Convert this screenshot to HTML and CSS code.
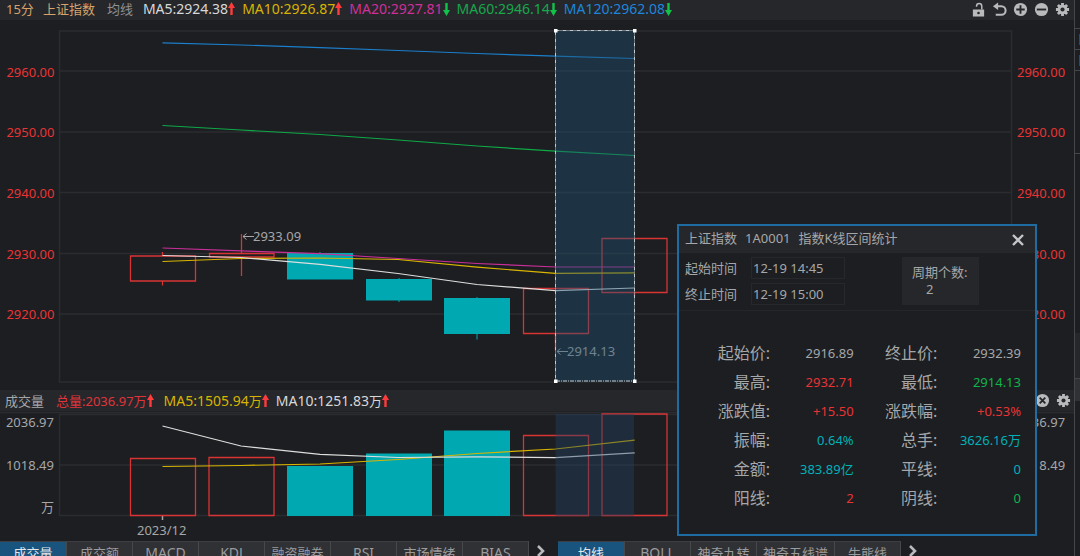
FILE: index.html
```
<!DOCTYPE html>
<html lang="zh-CN">
<head>
<meta charset="utf-8">
<title>上证指数 15分</title>
<link rel="stylesheet" href="styles.css">
</head>
<body>
<svg class="defs" aria-hidden="true">
  <symbol id="up" viewBox="0 0 7 14"><path d="M3.500 0 7 6H4.700v7H2.300V6H0z"/></symbol>
  <symbol id="down" viewBox="0 0 7 14"><path d="M3.500 14 7 8H4.700V1H2.300v7H0z"/></symbol>
  <symbol id="gear" viewBox="0 0 16 16">
    <path fill="none" stroke="currentColor" stroke-width="3" d="M8 1v14M1 8h14M3.100 3.100l9.800 9.800M12.900 3.100l-9.800 9.800"/>
    <circle cx="8" cy="8" r="5.200"/><circle cx="8" cy="8" r="2.200" fill="#26272b"/>
  </symbol>
  <symbol id="chevron" viewBox="0 0 10 12"><path fill="none" stroke="currentColor" stroke-width="2.600" d="M2 1l5 5-5 5"/></symbol>
</svg>
<div class="app">
  <main class="board">
    <header class="bar">
      <div class="legend">
        <span class="period">15分</span>
        <span class="name">上证指数</span>
        <span class="group">均线</span>
        <span class="ma white">MA5:2924.38<svg class="arrow rise"><use href="#up"/></svg></span>
        <span class="ma yellow">MA10:2926.87<svg class="arrow rise"><use href="#up"/></svg></span>
        <span class="ma pink">MA20:2927.81<svg class="arrow fall"><use href="#down"/></svg></span>
        <span class="ma green">MA60:2946.14<svg class="arrow fall"><use href="#down"/></svg></span>
        <span class="ma blue">MA120:2962.08<svg class="arrow fall"><use href="#down"/></svg></span>
      </div>
      <div class="tools">
        <button type="button" aria-label="解锁"><svg viewBox="0 0 16 16"><path d="M2 8h12v7.500H2z"/><path fill="none" stroke="currentColor" stroke-width="1.600" d="M11.500 8V4.500a2.800 2.800 0 0 0-5.600 0V5"/><circle cx="8" cy="11.700" r="1.400" fill="#26272b"/></svg></button>
        <button type="button" aria-label="撤销"><svg viewBox="0 0 16 16"><path d="M1 4.500 6.500.500v8z"/><path fill="none" stroke="currentColor" stroke-width="2.200" d="M5 4.500h5a4.500 4.500 0 0 1 0 9H4"/></svg></button>
        <button type="button" aria-label="放大"><svg viewBox="0 0 16 16"><circle cx="8" cy="8" r="7"/><path stroke="#26272b" stroke-width="2" d="M8 3.500v9M3.500 8h9"/></svg></button>
        <button type="button" aria-label="缩小"><svg viewBox="0 0 16 16"><circle cx="8" cy="8" r="7"/><path stroke="#26272b" stroke-width="2" d="M3 8h10"/></svg></button>
        <button type="button" aria-label="设置"><svg><use href="#gear"/></svg></button>
      </div>
    </header>

    <svg class="chart" viewBox="0 20 1074 370" role="img" aria-label="上证指数15分钟K线">
      <g class="grid">
        <path d="M59.500 31H1011.500V382H59.500zM60 71H1011M60 132H1011M60 192.500H1011M60 253.500H1011M60 314H1011"/>
      </g>
      <g class="price end">
        <text x="54.500" y="77">2960.00</text><text x="54.500" y="137">2950.00</text><text x="54.500" y="198">2940.00</text><text x="54.500" y="259">2930.00</text><text x="54.500" y="319">2920.00</text>
      </g>
      <g class="price">
        <text x="1017" y="77">2960.00</text><text x="1017" y="137">2950.00</text><text x="1017" y="198">2940.00</text><text x="1017" y="259">2930.00</text><text x="1017" y="319">2920.00</text>
      </g>
      <g class="candle-up">
        <path d="M130.500 256h65v25h-65zM162.500 252v4M162.500 281v4.500M209.500 253.500h64.500v3.500h-64.500zM241.500 234v19.500M241.500 257v19M523.500 288.500h65v45h-65zM555.500 333.500v17M602 238.500h65v54h-65zM634.500 292.500v4"/>
      </g>
      <g class="candle-down">
        <path d="M287 253h66v26.500h-66zM319.500 252h1v1h-1zM366 279h66v21.500h-66zM398.500 278h1v24h-1zM444 298h66v36h-66zM476.500 297h1v42.500h-1z"/>
      </g>
      <g class="line">
        <polyline class="s-blue" points="162.500,42.800 241,45 320,47.700 398,50.500 477,53.500 555.500,56.200 634.500,58.500"/>
        <polyline class="s-green" points="162.500,125.500 241,130 320,134.500 398,140 477,146 555.500,151.200 634.500,155.500"/>
        <polyline class="s-pink" points="162.500,248 241,250.800 320,253.700 398,258.500 477,263.500 555.500,267 634.500,267"/>
        <polyline class="s-yellow" points="162.500,261.500 241,258.500 320,258 398,259.500 477,267.200 555.500,273.300 634.500,272.800"/>
        <polyline class="s-white" points="162.500,255.500 241,257.500 320,264.300 398,273.500 477,284.500 555.500,290.700 634.500,288"/>
      </g>
      <g class="mark">
        <path d="M243 236.500h11M246.500 233.500l-3.500 3 3.500 3M557 351.500h11M560.500 348.500l-3.500 3 3.500 3"/>
        <text x="253" y="241">2933.09</text><text x="567" y="356">2914.13</text>
      </g>
      <rect class="range" x="555.500" y="30.500" width="79" height="351"/>
      <path class="range-edge" d="M555.500 30.500h79v350.500h-79z"/>
      <path class="handles" d="M554 29h3.500v3.500H554zM633 29h3.500v3.500H633zM554 379.500h3.500v3.500H554zM633 379.500h3.500v3.500H633z"/>
    </svg>

    <header class="bar volume-bar">
      <div class="legend">
        <span class="group">成交量</span>
        <span class="total">总量:2036.97万<svg class="arrow rise"><use href="#up"/></svg></span>
        <span class="ma yellow">MA5:1505.94<small>万</small><svg class="arrow rise"><use href="#up"/></svg></span>
        <span class="ma white">MA10:1251.83<small>万</small><svg class="arrow rise"><use href="#up"/></svg></span>
      </div>
      <div class="tools">
        <button type="button" aria-label="关闭"><svg viewBox="0 0 16 16"><circle cx="8" cy="8" r="7"/><path stroke="#26272b" stroke-width="2" d="M5 5l6 6M11 5l-6 6"/></svg></button>
        <button type="button" aria-label="指标设置"><svg><use href="#gear"/></svg></button>
      </div>
    </header>

    <svg class="chart" viewBox="0 411 1074 130" role="img" aria-label="成交量">
      <path class="grid" d="M59.500 414.500H1011.500V515.500H59.500zM60 465H1011M0 412.500H1074"/>
      <g class="scale end"><text x="54" y="427">2036.97</text><text x="54" y="470">1018.49</text><text x="54" y="512">万</text></g>
      <g class="scale"><text x="1017" y="427">2036.97</text><text x="1017" y="470">1018.49</text><text x="137" y="535">2023/12</text></g>
      <path class="tick" d="M162.500 516v4"/>
      <path class="candle-up" d="M130.500 458.500h65v57h-65zM209 457.500h65v58h-65zM523.500 435.500h65v80h-65zM602 414h65v101.500h-65z"/>
      <path class="candle-down" d="M287 466h66v50h-66zM366 453.500h66v62.500h-66zM444 430.500h66v85.500h-66z"/>
      <g class="line">
        <polyline class="s-yellow" points="162.500,466.500 241,465.500 320,464 398,459.500 477,453.500 555.500,449 634.500,440.200"/>
        <polyline class="s-white" points="162.500,426 241,446 320,454.300 398,457.500 477,456.800 555.500,457.700 634.500,452.800"/>
      </g>
      <rect class="volume-range" x="555.500" y="414" width="78.500" height="102"/>
    </svg>

    <nav class="tabs">
      <button type="button" class="tab active">成交量</button>
      <button type="button" class="tab">成交额</button>
      <button type="button" class="tab latin">MACD</button>
      <button type="button" class="tab latin">KDJ</button>
      <button type="button" class="tab">融资融券</button>
      <button type="button" class="tab latin">RSI</button>
      <button type="button" class="tab">市场情绪</button>
      <button type="button" class="tab latin">BIAS</button>
      <button type="button" class="more" aria-label="更多副图指标"><svg><use href="#chevron"/></svg></button>
      <button type="button" class="tab active">均线</button>
      <button type="button" class="tab latin">BOLL</button>
      <button type="button" class="tab">神奇九转</button>
      <button type="button" class="tab wide">神奇五线谱</button>
      <button type="button" class="tab">牛熊线</button>
      <button type="button" class="more" aria-label="更多主图指标"><svg><use href="#chevron"/></svg></button>
    </nav>
  </main>

  <aside class="rail">
    <div class="cell head"></div>
    <div class="cell short chip"></div>
    <div class="cell short chip"></div>
    <div class="cell medium"></div>
    <div class="cell tall"></div>
    <div class="cell shade"></div>
    <div class="cell light"></div>
  </aside>

  <section class="dialog" role="dialog" aria-labelledby="dialog-title">
    <header class="dialog-head">
      <h2 id="dialog-title"><span>上证指数</span><span>1A0001</span><span>指数K线区间统计</span></h2>
      <button type="button" aria-label="关闭窗口"><svg viewBox="0 0 12 12"><path d="M1 1l10 10M11 1 1 11"/></svg></button>
    </header>
    <div class="times">
      <div class="fields">
        <label for="from">起始时间</label><input id="from" type="text" value="12-19 14:45">
        <label for="to">终止时间</label><input id="to" type="text" value="12-19 15:00">
      </div>
      <div class="count"><span>周期个数:</span><span class="number">2</span></div>
    </div>
    <table class="stats">
      <tbody>
        <tr><th scope="row">起始价:</th><td>2916.89</td><th scope="row">终止价:</th><td>2932.39</td></tr>
        <tr><th scope="row">最高:</th><td class="red">2932.71</td><th scope="row">最低:</th><td class="lime">2914.13</td></tr>
        <tr><th scope="row">涨跌值:</th><td class="red">+15.50</td><th scope="row">涨跌幅:</th><td class="red">+0.53%</td></tr>
        <tr><th scope="row">振幅:</th><td class="cyan">0.64%</td><th scope="row">总手:</th><td class="cyan">3626.16万</td></tr>
        <tr><th scope="row">金额:</th><td class="cyan">383.89亿</td><th scope="row">平线:</th><td class="cyan">0</td></tr>
        <tr><th scope="row">阳线:</th><td class="red">2</td><th scope="row">阴线:</th><td class="lime">0</td></tr>
      </tbody>
    </table>
  </section>
</div>
</body>
</html>
```
FILE: styles.css
```
* { box-sizing: border-box; }

body {
  margin: 0;
  background: #1c1e21;
  color: #a6a7a9;
  font: 13px/20px "Noto Sans", "Noto Sans CJK SC", sans-serif;
  overflow: hidden;
}

button {
  border: 0;
  padding: 0;
  background: none;
  color: #b9babc;
  font: inherit;
}

.defs { position: absolute; width: 0; height: 0; }

.app { position: relative; display: flex; height: 100vh; overflow: hidden; }
.board { flex: 1; min-width: 0; }

/* Legend bars */
.bar {
  display: flex;
  align-items: center;
  justify-content: space-between;
  height: 20px;
  padding: 0 4px 2px 6px;
  background: #26272b;
  white-space: nowrap;
}
.volume-bar { height: 21px; padding: 0 3px 0 5px; }
.legend { display: flex; align-items: center; }
.legend > span { display: flex; align-items: center; }
.legend small { font-size: 13px; }
.period, .name { color: #d6a36c; }
.period { margin-right: 9px; }
.name { margin-right: 12px; }
.group { color: #8f9092; margin-right: 10px; }
.volume-bar .group { color: #a6a7a9; margin-right: 12px; }
.ma { font-size: 14px; margin-right: 7px; }
.total { color: #e0343a; margin-right: 10px; }
.arrow { width: 7px; height: 14px; }
.rise { fill: #ff3b3b; }
.fall { fill: #12c24a; }
.white { color: #d8d8d8; }
.yellow { color: #d8b400; }
.pink { color: #cf2f98; }
.green { color: #17a84c; }
.blue { color: #1b86dc; }

.tools { display: flex; gap: 6px; }
.tools button, .tools svg { display: block; width: 15px; height: 15px; }
.tools svg { fill: currentColor; }

/* Charts */
.chart { display: block; width: 100%; height: auto; }
.chart text { font-size: 13px; }
.end { text-anchor: end; }
.price { fill: #e93435; }
.scale { fill: #a6a7a9; }
.grid { fill: none; stroke: #2b2c30; stroke-width: 1.500; }
.tick { stroke: #a6a7a9; stroke-width: 1.500; }
.candle-up { fill: none; stroke: #d83434; stroke-width: 1.300; }
.candle-down { fill: #00a8b1; }
.line { fill: none; stroke-width: 1.200; }
.s-blue { stroke: #1c7fcc; }
.s-green { stroke: #0fa948; }
.s-pink { stroke: #c92f98; }
.s-yellow { stroke: #d9b500; }
.s-white { stroke: #dedede; }
.mark { fill: #a6a7a9; }
.mark path { fill: none; stroke: #a6a7a9; }
.range { fill: rgba(30, 80, 115, 0.42); }
.volume-range { fill: rgba(33, 65, 98, 0.42); }
.range-edge { fill: none; stroke: #c3c8cb; stroke-dasharray: 4 1 1 1; }
.handles { fill: #fff; }

/* Indicator tabs */
.tabs { display: flex; height: 22px; }
.tab {
  flex: none;
  width: 66px;
  border-top: 1px solid #3d3e42;
  border-right: 1px solid #47484c;
  background: #303135;
  color: #9b9c9e;
  line-height: 20px;
  white-space: nowrap;
}
.tab.wide { width: 78px; }
.tab.latin { font-size: 14px; }
.tab.active { width: 67px; background: #19547f; color: #e4e8eb; }
.more { display: flex; justify-content: center; width: 29px; padding: 4px 6px 0 0; }
.more svg { width: 10px; height: 12px; }

/* Neighbouring panel edge */
.rail { flex: none; width: 6px; border-left: 1px solid #45464a; }
.cell { border-bottom: 1px solid #45464a; }
.head { height: 29px; }
.short { height: 21px; }
.chip { background: linear-gradient(#1d4c82, #1d4c82) right center / 1px 11px no-repeat; }
.medium { height: 83px; }
.tall { height: 179px; border-bottom: 0; }
.shade { height: 46px; background: #26272b; }
.light { height: 22px; border-bottom: 0; background: #303135; }

/* Range statistics window */
.dialog {
  position: absolute;
  top: 224px;
  right: 43px;
  width: 360px;
  padding-bottom: 22px;
  border: 2px solid #1f6ca3;
  background: #1c1e21;
}
.dialog-head {
  display: flex;
  align-items: center;
  justify-content: space-between;
  height: 27px;
  padding: 0 11px 3px 6px;
  background: #26272b;
}
.dialog-head h2 { display: flex; gap: 8px; margin: 0; font-size: 13px; font-weight: 400; }
.dialog-head button { padding-top: 4px; }
.dialog-head svg { display: block; width: 12px; height: 12px; stroke: #c4c5c7; stroke-width: 2.400; }
.times {
  display: flex;
  align-items: flex-start;
  justify-content: space-between;
  padding: 4px 56px 5px 6px;
  border-bottom: 1px solid #25262a;
}
.fields { display: grid; grid-template-columns: 66px 94px; row-gap: 4px; align-items: center; }
.fields input {
  width: 100%;
  height: 22px;
  padding: 0 1px;
  border: 1px solid #27282c;
  background: transparent;
  color: inherit;
  font: inherit;
}
.count { display: grid; width: 77px; padding: 7px 10px 7px; background: #26272b; line-height: 17px; white-space: nowrap; }
.number { padding-left: 14px; }
.stats { width: 342px; margin-top: 27px; border-collapse: collapse; table-layout: fixed; }
.stats th, .stats td { height: 29px; padding: 0; text-align: right; white-space: nowrap; line-height: 24px; }
.stats th { font-size: 16px; font-weight: 400; }
.stats th:first-child { width: 91px; }
.red { color: #e93435; }
.lime { color: #0fb44c; }
.cyan { color: #00b0ba; }
```
